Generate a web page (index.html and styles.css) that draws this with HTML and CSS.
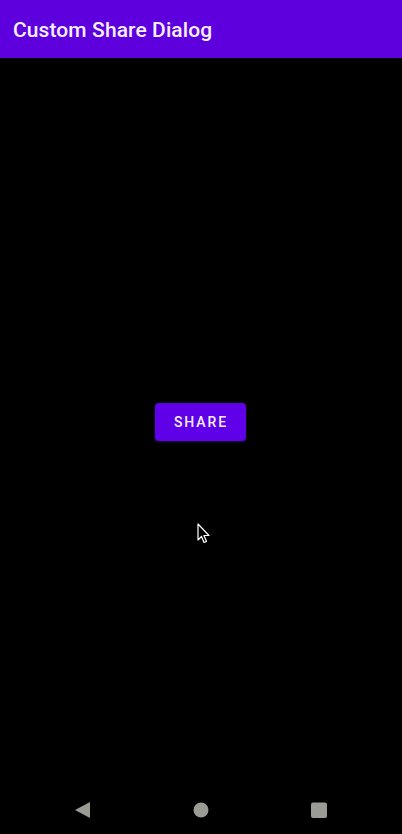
FILE: index.html
```html
<!DOCTYPE html>
<html>
<head>
<meta charset="utf-8">
<link rel="stylesheet" href="styles.css">
</head>
<body>
<div class="screen">
  <header class="appbar"><h1 class="title">Custom Share Dialog</h1></header>
  <main class="content">
    <button class="share-btn">SHARE</button>
  </main>
  <nav class="navbar">
    <svg class="nav-icon" width="16" height="16" viewBox="0 0 16 16"><path d="M0 8 L15 0 L15 16 Z" fill="#9b9b96"/></svg>
    <svg class="nav-icon" width="16" height="16" viewBox="0 0 16 16"><circle cx="8" cy="8" r="7.5" fill="#9b9b96"/></svg>
    <svg class="nav-icon" width="16" height="16" viewBox="0 0 16 16"><rect x="0" y="0.5" width="16" height="15.5" rx="2" fill="#9b9b96"/></svg>
  </nav>
  <svg class="cursor" width="14" height="22" viewBox="0 0 14 22"><path d="M1 1 L1 17 L4.5 13.5 L7 19.5 L9.5 18.5 L7 12.5 L12 12.5 Z" fill="#000" stroke="#fff" stroke-width="1.2" stroke-linejoin="round"/></svg>
</div>
</body>
</html>
```
FILE: styles.css
```css
html, body {
  margin: 0;
  padding: 0;
  background: #000;
}
.screen {
  position: relative;
  width: 402px;
  height: 834px;
  display: flex;
  flex-direction: column;
  background: #000;
  font-family: Roboto, "Noto Sans", sans-serif;
}
.appbar {
  height: 58px;
  flex: none;
  background: #5e00de;
  display: flex;
  align-items: center;
  padding: 0 13px;
  box-sizing: border-box;
}
.title {
  margin: 0;
  color: #f6f0ff;
  font-size: 21px;
  font-weight: 500;
  letter-spacing: 0.1px;
  padding-top: 2px;
}
.content {
  flex: 1;
  display: flex;
  align-items: center;
  justify-content: center;
}
.share-btn {
  width: 91px;
  height: 38px;
  margin-right: 2px;
  background: #5f00e8;
  color: #f6f0ff;
  border: none;
  border-radius: 4px;
  font-family: Roboto, "Noto Sans", sans-serif;
  font-size: 14px;
  font-weight: 500;
  letter-spacing: 1.9px;
  text-indent: 1.9px;
  padding: 0;
  box-shadow: 0 1px 3px rgba(120, 60, 255, 0.25);
}
.navbar {
  height: 48px;
  flex: none;
  display: flex;
  align-items: center;
  justify-content: center;
  gap: 102px;
}
.nav-icon {
  display: block;
}
.cursor {
  position: absolute;
  left: 197px;
  top: 523px;
}
```
